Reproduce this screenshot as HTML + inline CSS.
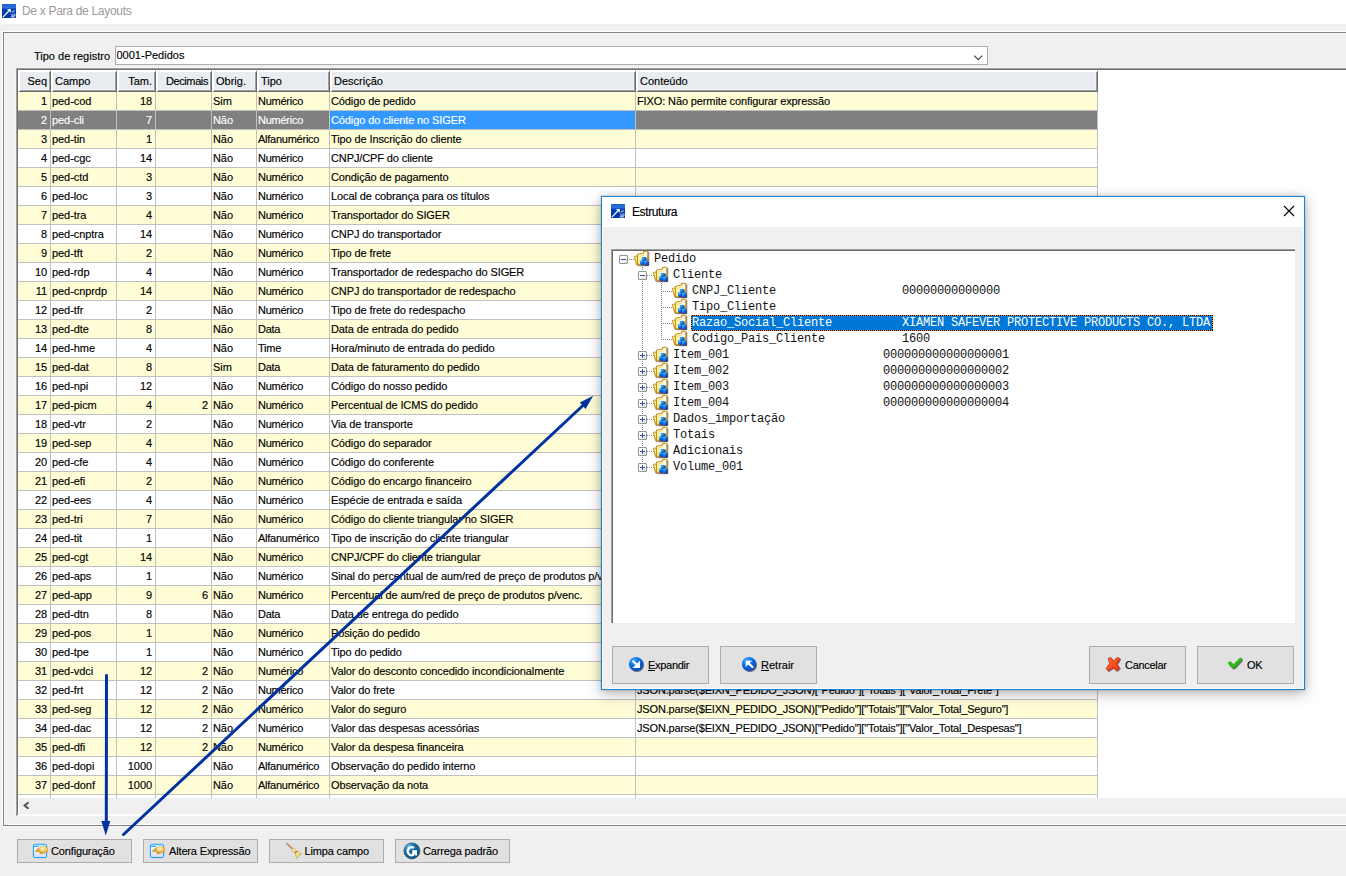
<!DOCTYPE html>
<html><head><meta charset="utf-8"><title>De x Para de Layouts</title>
<style>
*{box-sizing:border-box;margin:0;padding:0}
html,body{width:1346px;height:876px;overflow:hidden;background:#fff}
body{position:relative;font-family:"Liberation Sans",sans-serif;font-size:11px;color:#000;-webkit-text-stroke:0.15px currentColor}
div,svg,span,i{position:absolute}
#main{left:0;top:24px;width:1346px;height:852px;background:#f0f0f0}
#title{-webkit-text-stroke:0;left:22px;top:3px;font-size:12px;letter-spacing:-0.3px;color:#9a9a9a;white-space:pre;line-height:16px}
/* group box (etched) */
#gb0{left:2px;top:31px;width:1400px;height:796px;border-left:1px solid #fff;border-top:1px solid #fff;border-bottom:1px solid #f7f7f7}
#gb{left:3px;top:32px;width:1400px;height:794px;border:1px solid #828282;border-right:0}
#gb2{left:4px;top:33px;width:1400px;height:792px;border-left:1px solid #f7f7f7;border-top:1px solid #f7f7f7;border-bottom:1px solid #fff}

#lbl{left:34px;top:49px;line-height:14px;white-space:pre}
#combo{left:115px;top:46px;width:873px;height:19px;border:1px solid #acacb8;background:#fff}
#combo span{left:0.5px;top:1px;line-height:14px;white-space:pre}
/* grid */
#grid0{left:15px;top:67px;width:1340px;height:749px;border-left:1px solid #f5f5f5;border-top:1px solid #f5f5f5}
#grid{left:16px;top:68px;width:1340px;height:748px;background:#fff;border-left:1px solid #a0a0a0;border-top:1px solid #a0a0a0}
#grid2{left:17px;top:69px;width:1340px;height:746px;border-left:1px solid #707070;border-top:1px solid #707070}
#gridwhite{left:18px;top:70px;width:1328px;height:728px;background:#fff}
#hs{left:19px;top:798px;width:1328px;height:16px;background:#f0f0f0}
.hc{top:70px;height:22px;background:#e9edf1;border-top:2px solid #fff;border-left:2px solid #fff;border-right:1px solid #696969;border-bottom:1px solid #696969;box-shadow:inset -1px -1px 0 #a0a0a0,inset -2px -2px 0 #eef2f6;line-height:14px;white-space:pre}
.hc span{top:2px}
.hc.l span{left:2px}
.hc.r span{right:3px}
.row{left:18px;width:1080px;height:19px;border-bottom:1px solid #c0c0c0;background:#fff}
.row.y{background:#fffdd6}
.row.sel{background:#808080;color:#fff}
.c{top:0;height:18px;line-height:18px;white-space:pre;overflow:hidden;padding:0 1px;letter-spacing:-0.07px}
.c.js{letter-spacing:-0.17px}
.c.r{text-align:right;padding-right:3px}
.c.hl{background:#3399ff}
.vs{top:92px;width:1px;height:706px;background:#c0c0c0}
.row.sel .c{}
/* buttons */
.btn{background:#e1e1e1;border:1px solid #adadad;white-space:pre;line-height:14px}
.btn span{top:4px;letter-spacing:-0.15px}
.btn span.d{top:11px;letter-spacing:-0.3px}
.ic{width:22px;height:19px;overflow:visible}
/* dialog */
#dlg{left:601px;top:196px;width:704px;height:494px;background:#f0f0f0;border:1px solid #1883d7;box-shadow:0 0 0 1px rgba(0,0,0,0.05),0 4px 14px rgba(0,0,0,0.27),0 0 6px rgba(0,0,0,0.13)}
#dlgt{left:602px;top:197px;width:702px;height:30px;background:#fff}
#dlgin{left:602px;top:197px;width:702px;height:492px;border:1px solid #fbfbfb;border-top:0}
#dtitle{left:632px;top:204px;font-size:12px;letter-spacing:-0.4px;line-height:16px;white-space:pre}
#tree{left:611px;top:249px;width:684px;height:374px;background:#fff;border-left:1px solid #a0a0a0;border-top:1px solid #a0a0a0}
#tree2{left:612px;top:250px;width:683px;height:373px;border-left:1px solid #696969;border-top:1px solid #696969}
#tree3{left:611px;top:623px;width:684px;height:1px;background:#ececec}
.tt{-webkit-text-stroke:0;font-family:"Liberation Mono",monospace;font-size:12px;letter-spacing:-0.2px;line-height:16px;height:16px;white-space:pre;padding-left:2px;color:#111}
.tt.w{color:#fff}
.tsel{height:16px;background:
 repeating-linear-gradient(90deg,#ff8a28 0,#ff8a28 1px,#000 1px,#000 2px) left top/100% 1px no-repeat,
 repeating-linear-gradient(90deg,#ff8a28 0,#ff8a28 1px,#000 1px,#000 2px) left bottom/100% 1px no-repeat,
 repeating-linear-gradient(180deg,#ff8a28 0,#ff8a28 1px,#000 1px,#000 2px) left top/1px 100% no-repeat,
 repeating-linear-gradient(180deg,#000 0,#000 1px,#ff8a28 1px,#ff8a28 2px) right top/1px 100% no-repeat,
 #0078d7}
.bx{width:9px;height:9px;border:1px solid #919191;background:linear-gradient(135deg,#fff 0%,#fff 40%,#d8d8d8 100%);border-radius:1px}
.bx .h{left:1px;top:3px;width:5px;height:1px;background:#3c4ea0}
.bx .v{left:3px;top:1px;width:1px;height:5px;background:#3c4ea0}
.dh{height:1px;background-image:repeating-linear-gradient(90deg,#808080 0,#808080 1px,transparent 1px,transparent 2px)}
.dv{width:1px;background-image:repeating-linear-gradient(180deg,#808080 0,#808080 1px,transparent 1px,transparent 2px)}
.fi{overflow:visible}
</style></head><body>
<svg width="0" height="0" style="left:0;top:0">
<defs>
<filter id="ds" x="-30%" y="-30%" width="170%" height="170%"><feDropShadow dx="0.9" dy="0.9" stdDeviation="0.55" flood-color="#000" flood-opacity="0.6"/></filter>
<filter id="ds2" x="-30%" y="-30%" width="170%" height="170%"><feDropShadow dx="0.8" dy="0.8" stdDeviation="0.5" flood-color="#101028" flood-opacity="0.7"/></filter>
<linearGradient id="gFold" x1="1" y1="0" x2="0" y2="1"><stop offset="0" stop-color="#ffffff"/><stop offset="0.4" stop-color="#fffbe0"/><stop offset="0.7" stop-color="#fff0a0"/><stop offset="1" stop-color="#fbdc58"/></linearGradient>
<linearGradient id="gCube" x1="0" y1="0" x2="1" y2="1"><stop offset="0" stop-color="#28a8ff"/><stop offset="0.5" stop-color="#0f6fe8"/><stop offset="1" stop-color="#0638b8"/></linearGradient>
<linearGradient id="gWin" x1="0" y1="0" x2="0" y2="1"><stop offset="0" stop-color="#ffffff"/><stop offset="0.45" stop-color="#f6f6ff"/><stop offset="1" stop-color="#d8d6fb"/></linearGradient>
<radialGradient id="gHand" cx="0.45" cy="0.3" r="0.75"><stop offset="0" stop-color="#fff6d8"/><stop offset="0.45" stop-color="#f2cf7c"/><stop offset="1" stop-color="#d9961f"/></radialGradient>
<linearGradient id="gBlue" x1="0" y1="0" x2="0" y2="1"><stop offset="0" stop-color="#1f5fd2"/><stop offset="0.3" stop-color="#2f74dc"/><stop offset="0.34" stop-color="#0640b0"/><stop offset="1" stop-color="#0338a6"/></linearGradient>
<radialGradient id="gBall" cx="0.33" cy="0.25" r="0.85"><stop offset="0" stop-color="#3fa6ff"/><stop offset="0.45" stop-color="#0b70e6"/><stop offset="1" stop-color="#0540b4"/></radialGradient>
<radialGradient id="gTeal" cx="0.3" cy="0.22" r="0.9"><stop offset="0" stop-color="#6ec4ea"/><stop offset="0.35" stop-color="#1773b2"/><stop offset="1" stop-color="#04507f"/></radialGradient>
<linearGradient id="gRed" x1="0" y1="0" x2="1" y2="1"><stop offset="0" stop-color="#ff7a40"/><stop offset="0.5" stop-color="#ff5018"/><stop offset="1" stop-color="#f03c0c"/></linearGradient>
<linearGradient id="gGreen" x1="0" y1="0" x2="0" y2="1"><stop offset="0" stop-color="#4cc832"/><stop offset="1" stop-color="#1fa012"/></linearGradient>
<!-- folder icon, 22x19, origin = (icon_x-3, row_y-2) -->
<g id="fold">
 <g filter="url(#ds2)">
 <path d="M3.3 7.4 L6.4 7.0 L6.4 15.4 L5.6 15.6 Z" fill="#fff3b8" stroke="#c48c06" stroke-width="0.9" stroke-linejoin="round"/>
 <path d="M6.4 5.3 L12.7 4.1 L12.5 2.3 L16.2 2.3 Q16.8 2.3 16.8 2.9 L16.7 15.7 L7 15.7 Q6.4 15.7 6.4 15.1 Z" fill="url(#gFold)" stroke="#c48c06" stroke-width="1" stroke-linejoin="round"/>
 </g>
 <path d="M8 7.2 L13.6 6.1" stroke="#ecd26a" stroke-width="0.7" fill="none"/>
 <g filter="url(#ds2)">
 <rect x="10.9" y="8.0" width="4.2" height="3.5" rx="0.5" fill="url(#gCube)"/>
 <rect x="9.1" y="11.3" width="4" height="4.1" rx="0.5" fill="url(#gCube)"/>
 <rect x="13.0" y="11.6" width="4.1" height="4.3" rx="0.5" fill="url(#gCube)"/>
 </g>
 <ellipse cx="12.4" cy="9.3" rx="1.2" ry="0.7" fill="#38c4ff" opacity="0.85"/>
 <ellipse cx="10.7" cy="12.6" rx="1.1" ry="0.6" fill="#5cd0ff" opacity="0.85"/>
 <ellipse cx="14.6" cy="12.9" rx="1.1" ry="0.6" fill="#5cd0ff" opacity="0.85"/>
</g>
<!-- app icon 14x14 -->
<g id="appico">
 <rect x="0" y="0" width="14" height="14" rx="0.6" fill="url(#gBlue)"/>
 <path d="M0.9 13.1 L6.8 7.0" stroke="#fff" stroke-width="1.25" fill="none"/>
 <path d="M4.9 5.2 L8.9 5.0 L8.7 8.9 L7.6 7.6 L6.2 6.4 Z" fill="#fff"/>
 <path d="M10.2 8.2 L12.6 6.4" stroke="#b8c8ee" stroke-width="1.1" fill="none"/>
 <path d="M9 10.6 L10.6 10.3 M12 9.2 L12.6 12.4 M8.6 12.9 L10.4 12.3 M10.6 11 L12.2 13.6 M13 10.6 L13.8 11.4" stroke="#9db4e6" stroke-width="1.2" fill="none" opacity="0.9"/>
 <rect x="9.8" y="11.2" width="2.6" height="2.6" fill="#a9bce8" opacity="0.8"/>
</g>
<!-- hand/window icon 22x19 -->
<g id="hand">
 <rect x="3.4" y="3.3" width="13.2" height="13.3" rx="1.4" fill="url(#gWin)" stroke="#0a9bff" stroke-width="1"/>
 <path d="M4 5.4 L8.9 5.4" stroke="#0a9bff" stroke-width="1"/>
 <path d="M4 4.3 L16 4.3" stroke="#9ad4ff" stroke-width="0.8"/>
 <path d="M5.1 10.1 L8.6 7.1 L10.8 7.3 L10 10 L6.2 10.9 Z" fill="#dca43c" stroke="#c88a1e" stroke-width="0.4"/>
 <path d="M9 10.3 L13.6 11.4 L12.9 13.1 L10.3 13 L9.2 11.6 Z" fill="#d1962c"/>
 <ellipse cx="13.3" cy="8.8" rx="4.6" ry="3.3" fill="url(#gHand)" stroke="#cf9428" stroke-width="0.5"/>
</g>
<!-- broom 22x19 -->
<g id="broom">
 <path d="M3.9 2.5 L9.2 7.5" stroke="#c28a52" stroke-width="1.5" stroke-linecap="round"/>
 <path d="M3.6 3.2 L8.7 8.1" stroke="#8f7a66" stroke-width="0.6" opacity="0.6"/>
 <ellipse cx="10.7" cy="9.1" rx="2.1" ry="1.7" transform="rotate(40 10.7 9.1)" fill="#f3e094" stroke="#b9a24e" stroke-width="0.4"/>
 <path d="M9 7 L10 6.4 L10.4 7.6 Z" fill="#c8a83c"/>
 <path d="M12.0 12.1 L14.9 10.3 L18.7 12.5 L13.5 17.5 Z" fill="#efd982" stroke="#b9a24e" stroke-width="0.5" stroke-linejoin="round"/>
 <path d="M13.6 17.2 L18.4 12.7" stroke="#a8903c" stroke-width="0.7" opacity="0.7"/>
 <circle cx="12.4" cy="11.4" r="0.75" fill="#d2501e"/>
 <circle cx="13.5" cy="10.5" r="0.75" fill="#d2501e"/>
</g>
<!-- G icon 22x19 -->
<g id="gico">
 <circle cx="10.9" cy="9.9" r="8" fill="url(#gTeal)" stroke="#15405e" stroke-width="0.6"/>
 <path d="M13.0 6.9 A4.0 4.0 0 1 0 12.8 13.6" fill="none" stroke="#fff" stroke-width="2.2"/>
 <path d="M10.8 9.2 L16 9.2 L16 14.6 L14.2 14.6 L13.8 13.6 L11 13.8 Z" fill="#fff"/>
 <path d="M8.6 10.4 L11.2 8.6 L11.2 12.4 Z" fill="#0a5a96"/>
</g>
<!-- Expandir 22x19 -->
<g id="expico">
 <circle cx="10" cy="10" r="7.1" fill="url(#gBall)" filter="url(#ds)"/>
 <path d="M7.3 7.5 L11 11" stroke="#fff" stroke-width="2.3" stroke-linecap="round"/>
 <path d="M13.9 6.4 L13.9 13.9 L6.4 13.9 L10.4 10.4 Z" fill="#fff"/>
</g>
<g id="retico">
 <circle cx="10.95" cy="10" r="7.05" fill="url(#gBall)" filter="url(#ds)"/>
 <path d="M14.4 13 L10 8.7" stroke="#fff" stroke-width="2.3" stroke-linecap="round"/>
 <path d="M7.7 6.8 L14.4 6.8 L10.6 9.6 L7.7 13.2 Z" fill="#fff"/>
</g>
<g id="xico">
 <path d="M5.2 4.6 L7.6 3.4 L10.4 7.4 L14 3.4 L16.8 4.6 L13.5 10 L16.5 14 L13.5 16.6 L9.8 13.3 L5 16.8 L3.2 14.3 L6.8 9.6 Z" fill="url(#gRed)" stroke="#c8201a" stroke-width="0.8" stroke-linejoin="round" filter="url(#ds)"/>
</g>
<g id="okico">
 <path d="M5.9 9.2 L9.3 12.9 L16.4 5.5" fill="none" stroke="url(#gGreen)" stroke-width="3.2" stroke-linecap="round" stroke-linejoin="round" filter="url(#ds)"/>
 <path d="M5.9 9.2 L9.3 12.9 L16.4 5.5" fill="none" stroke="#2cb01a" stroke-width="3.2" stroke-linecap="round" stroke-linejoin="round"/>
 <path d="M6 8.6 L9.3 12 L16 4.9" fill="none" stroke="#58d03c" stroke-width="0.9" stroke-linecap="round" opacity="0.8"/>
</g>
</defs></svg>

<!-- title bar -->
<svg style="left:2px;top:4px" width="14" height="14" viewBox="0 0 14 14"><use href="#appico"/></svg>
<div id="title">De x Para de Layouts</div>

<div id="main"></div>
<div id="gb0"></div><div id="gb"></div><div id="gb2"></div>
<div id="lbl">Tipo de registro</div>
<div id="combo"><span>0001-Pedidos</span>
 <svg style="left:857px;top:8px" width="11" height="7" viewBox="0 0 11 7"><path d="M1.2 0.7 L5.2 4.7 L9.2 0.7" fill="none" stroke="#404040" stroke-width="1.2"/></svg>
</div>

<div id="grid0"></div><div id="grid"></div><div id="grid2"></div><div id="gridwhite"></div>
<div class="hc r" style="left:18px;width:33px"><span>Seq</span></div>
<div class="hc l" style="left:51px;width:66px"><span>Campo</span></div>
<div class="hc r" style="left:117px;width:39px"><span>Tam.</span></div>
<div class="hc r" style="left:156px;width:56px"><span style="letter-spacing:-0.4px">Decimais</span></div>
<div class="hc l" style="left:212px;width:45px"><span>Obrig.</span></div>
<div class="hc l" style="left:257px;width:73px"><span>Tipo</span></div>
<div class="hc l" style="left:330px;width:306px"><span>Descrição</span></div>
<div class="hc l" style="left:636px;width:462px"><span>Conteúdo</span></div>
<div class="row y" style="top:92px">
<div class="c r" style="left:0px;width:32px">1</div>
<div class="c l" style="left:33px;width:65px">ped-cod</div>
<div class="c r" style="left:99px;width:38px">18</div>
<div class="c r" style="left:138px;width:55px"></div>
<div class="c l" style="left:194px;width:44px">Sim</div>
<div class="c l" style="left:239px;width:72px;letter-spacing:-0.25px">Numérico</div>
<div class="c l" style="left:312px;width:305px;letter-spacing:-0.11px">Código de pedido</div>
<div class="c l" style="left:618px;width:461px;letter-spacing:-0.12px">FIXO: Não permite configurar expressão</div>
</div>
<div class="row sel" style="top:111px">
<div class="c r" style="left:0px;width:32px">2</div>
<div class="c l" style="left:33px;width:65px">ped-cli</div>
<div class="c r" style="left:99px;width:38px">7</div>
<div class="c r" style="left:138px;width:55px"></div>
<div class="c l" style="left:194px;width:44px">Não</div>
<div class="c l" style="left:239px;width:72px;letter-spacing:-0.25px">Numérico</div>
<div class="c l hl" style="left:312px;width:305px;letter-spacing:-0.11px">Código do cliente no SIGER</div>
<div class="c l" style="left:618px;width:461px;letter-spacing:-0.12px"></div>
</div>
<div class="row y" style="top:130px">
<div class="c r" style="left:0px;width:32px">3</div>
<div class="c l" style="left:33px;width:65px">ped-tin</div>
<div class="c r" style="left:99px;width:38px">1</div>
<div class="c r" style="left:138px;width:55px"></div>
<div class="c l" style="left:194px;width:44px">Não</div>
<div class="c l" style="left:239px;width:72px;letter-spacing:-0.25px">Alfanumérico</div>
<div class="c l" style="left:312px;width:305px;letter-spacing:-0.11px">Tipo de Inscrição do cliente</div>
<div class="c l" style="left:618px;width:461px;letter-spacing:-0.12px"></div>
</div>
<div class="row" style="top:149px">
<div class="c r" style="left:0px;width:32px">4</div>
<div class="c l" style="left:33px;width:65px">ped-cgc</div>
<div class="c r" style="left:99px;width:38px">14</div>
<div class="c r" style="left:138px;width:55px"></div>
<div class="c l" style="left:194px;width:44px">Não</div>
<div class="c l" style="left:239px;width:72px;letter-spacing:-0.25px">Numérico</div>
<div class="c l" style="left:312px;width:305px;letter-spacing:-0.11px">CNPJ/CPF do cliente</div>
<div class="c l" style="left:618px;width:461px;letter-spacing:-0.12px"></div>
</div>
<div class="row y" style="top:168px">
<div class="c r" style="left:0px;width:32px">5</div>
<div class="c l" style="left:33px;width:65px">ped-ctd</div>
<div class="c r" style="left:99px;width:38px">3</div>
<div class="c r" style="left:138px;width:55px"></div>
<div class="c l" style="left:194px;width:44px">Não</div>
<div class="c l" style="left:239px;width:72px;letter-spacing:-0.25px">Numérico</div>
<div class="c l" style="left:312px;width:305px;letter-spacing:-0.11px">Condição de pagamento</div>
<div class="c l" style="left:618px;width:461px;letter-spacing:-0.12px"></div>
</div>
<div class="row" style="top:187px">
<div class="c r" style="left:0px;width:32px">6</div>
<div class="c l" style="left:33px;width:65px">ped-loc</div>
<div class="c r" style="left:99px;width:38px">3</div>
<div class="c r" style="left:138px;width:55px"></div>
<div class="c l" style="left:194px;width:44px">Não</div>
<div class="c l" style="left:239px;width:72px;letter-spacing:-0.25px">Numérico</div>
<div class="c l" style="left:312px;width:305px;letter-spacing:-0.11px">Local de cobrança para os títulos</div>
<div class="c l" style="left:618px;width:461px;letter-spacing:-0.12px"></div>
</div>
<div class="row y" style="top:206px">
<div class="c r" style="left:0px;width:32px">7</div>
<div class="c l" style="left:33px;width:65px">ped-tra</div>
<div class="c r" style="left:99px;width:38px">4</div>
<div class="c r" style="left:138px;width:55px"></div>
<div class="c l" style="left:194px;width:44px">Não</div>
<div class="c l" style="left:239px;width:72px;letter-spacing:-0.25px">Numérico</div>
<div class="c l" style="left:312px;width:305px;letter-spacing:-0.11px">Transportador do SIGER</div>
<div class="c l" style="left:618px;width:461px;letter-spacing:-0.12px"></div>
</div>
<div class="row" style="top:225px">
<div class="c r" style="left:0px;width:32px">8</div>
<div class="c l" style="left:33px;width:65px">ped-cnptra</div>
<div class="c r" style="left:99px;width:38px">14</div>
<div class="c r" style="left:138px;width:55px"></div>
<div class="c l" style="left:194px;width:44px">Não</div>
<div class="c l" style="left:239px;width:72px;letter-spacing:-0.25px">Numérico</div>
<div class="c l" style="left:312px;width:305px;letter-spacing:-0.11px">CNPJ do transportador</div>
<div class="c l" style="left:618px;width:461px;letter-spacing:-0.12px"></div>
</div>
<div class="row y" style="top:244px">
<div class="c r" style="left:0px;width:32px">9</div>
<div class="c l" style="left:33px;width:65px">ped-tft</div>
<div class="c r" style="left:99px;width:38px">2</div>
<div class="c r" style="left:138px;width:55px"></div>
<div class="c l" style="left:194px;width:44px">Não</div>
<div class="c l" style="left:239px;width:72px;letter-spacing:-0.25px">Numérico</div>
<div class="c l" style="left:312px;width:305px;letter-spacing:-0.11px">Tipo de frete</div>
<div class="c l" style="left:618px;width:461px;letter-spacing:-0.12px"></div>
</div>
<div class="row" style="top:263px">
<div class="c r" style="left:0px;width:32px">10</div>
<div class="c l" style="left:33px;width:65px">ped-rdp</div>
<div class="c r" style="left:99px;width:38px">4</div>
<div class="c r" style="left:138px;width:55px"></div>
<div class="c l" style="left:194px;width:44px">Não</div>
<div class="c l" style="left:239px;width:72px;letter-spacing:-0.25px">Numérico</div>
<div class="c l" style="left:312px;width:305px;letter-spacing:-0.11px">Transportador de redespacho do SIGER</div>
<div class="c l" style="left:618px;width:461px;letter-spacing:-0.12px"></div>
</div>
<div class="row y" style="top:282px">
<div class="c r" style="left:0px;width:32px">11</div>
<div class="c l" style="left:33px;width:65px">ped-cnprdp</div>
<div class="c r" style="left:99px;width:38px">14</div>
<div class="c r" style="left:138px;width:55px"></div>
<div class="c l" style="left:194px;width:44px">Não</div>
<div class="c l" style="left:239px;width:72px;letter-spacing:-0.25px">Numérico</div>
<div class="c l" style="left:312px;width:305px;letter-spacing:-0.11px">CNPJ do transportador de redespacho</div>
<div class="c l" style="left:618px;width:461px;letter-spacing:-0.12px"></div>
</div>
<div class="row" style="top:301px">
<div class="c r" style="left:0px;width:32px">12</div>
<div class="c l" style="left:33px;width:65px">ped-tfr</div>
<div class="c r" style="left:99px;width:38px">2</div>
<div class="c r" style="left:138px;width:55px"></div>
<div class="c l" style="left:194px;width:44px">Não</div>
<div class="c l" style="left:239px;width:72px;letter-spacing:-0.25px">Numérico</div>
<div class="c l" style="left:312px;width:305px;letter-spacing:-0.11px">Tipo de frete do redespacho</div>
<div class="c l" style="left:618px;width:461px;letter-spacing:-0.12px"></div>
</div>
<div class="row y" style="top:320px">
<div class="c r" style="left:0px;width:32px">13</div>
<div class="c l" style="left:33px;width:65px">ped-dte</div>
<div class="c r" style="left:99px;width:38px">8</div>
<div class="c r" style="left:138px;width:55px"></div>
<div class="c l" style="left:194px;width:44px">Não</div>
<div class="c l" style="left:239px;width:72px;letter-spacing:-0.25px">Data</div>
<div class="c l" style="left:312px;width:305px;letter-spacing:-0.11px">Data de entrada do pedido</div>
<div class="c l" style="left:618px;width:461px;letter-spacing:-0.12px"></div>
</div>
<div class="row" style="top:339px">
<div class="c r" style="left:0px;width:32px">14</div>
<div class="c l" style="left:33px;width:65px">ped-hme</div>
<div class="c r" style="left:99px;width:38px">4</div>
<div class="c r" style="left:138px;width:55px"></div>
<div class="c l" style="left:194px;width:44px">Não</div>
<div class="c l" style="left:239px;width:72px;letter-spacing:-0.25px">Time</div>
<div class="c l" style="left:312px;width:305px;letter-spacing:-0.11px">Hora/minuto de entrada do pedido</div>
<div class="c l" style="left:618px;width:461px;letter-spacing:-0.12px"></div>
</div>
<div class="row y" style="top:358px">
<div class="c r" style="left:0px;width:32px">15</div>
<div class="c l" style="left:33px;width:65px">ped-dat</div>
<div class="c r" style="left:99px;width:38px">8</div>
<div class="c r" style="left:138px;width:55px"></div>
<div class="c l" style="left:194px;width:44px">Sim</div>
<div class="c l" style="left:239px;width:72px;letter-spacing:-0.25px">Data</div>
<div class="c l" style="left:312px;width:305px;letter-spacing:-0.11px">Data de faturamento do pedido</div>
<div class="c l" style="left:618px;width:461px;letter-spacing:-0.12px"></div>
</div>
<div class="row" style="top:377px">
<div class="c r" style="left:0px;width:32px">16</div>
<div class="c l" style="left:33px;width:65px">ped-npi</div>
<div class="c r" style="left:99px;width:38px">12</div>
<div class="c r" style="left:138px;width:55px"></div>
<div class="c l" style="left:194px;width:44px">Não</div>
<div class="c l" style="left:239px;width:72px;letter-spacing:-0.25px">Numérico</div>
<div class="c l" style="left:312px;width:305px;letter-spacing:-0.11px">Código do nosso pedido</div>
<div class="c l" style="left:618px;width:461px;letter-spacing:-0.12px"></div>
</div>
<div class="row y" style="top:396px">
<div class="c r" style="left:0px;width:32px">17</div>
<div class="c l" style="left:33px;width:65px">ped-picm</div>
<div class="c r" style="left:99px;width:38px">4</div>
<div class="c r" style="left:138px;width:55px">2</div>
<div class="c l" style="left:194px;width:44px">Não</div>
<div class="c l" style="left:239px;width:72px;letter-spacing:-0.25px">Numérico</div>
<div class="c l" style="left:312px;width:305px;letter-spacing:-0.11px">Percentual de ICMS do pedido</div>
<div class="c l" style="left:618px;width:461px;letter-spacing:-0.12px"></div>
</div>
<div class="row" style="top:415px">
<div class="c r" style="left:0px;width:32px">18</div>
<div class="c l" style="left:33px;width:65px">ped-vtr</div>
<div class="c r" style="left:99px;width:38px">2</div>
<div class="c r" style="left:138px;width:55px"></div>
<div class="c l" style="left:194px;width:44px">Não</div>
<div class="c l" style="left:239px;width:72px;letter-spacing:-0.25px">Numérico</div>
<div class="c l" style="left:312px;width:305px;letter-spacing:-0.11px">Via de transporte</div>
<div class="c l" style="left:618px;width:461px;letter-spacing:-0.12px"></div>
</div>
<div class="row y" style="top:434px">
<div class="c r" style="left:0px;width:32px">19</div>
<div class="c l" style="left:33px;width:65px">ped-sep</div>
<div class="c r" style="left:99px;width:38px">4</div>
<div class="c r" style="left:138px;width:55px"></div>
<div class="c l" style="left:194px;width:44px">Não</div>
<div class="c l" style="left:239px;width:72px;letter-spacing:-0.25px">Numérico</div>
<div class="c l" style="left:312px;width:305px;letter-spacing:-0.11px">Código do separador</div>
<div class="c l" style="left:618px;width:461px;letter-spacing:-0.12px"></div>
</div>
<div class="row" style="top:453px">
<div class="c r" style="left:0px;width:32px">20</div>
<div class="c l" style="left:33px;width:65px">ped-cfe</div>
<div class="c r" style="left:99px;width:38px">4</div>
<div class="c r" style="left:138px;width:55px"></div>
<div class="c l" style="left:194px;width:44px">Não</div>
<div class="c l" style="left:239px;width:72px;letter-spacing:-0.25px">Numérico</div>
<div class="c l" style="left:312px;width:305px;letter-spacing:-0.11px">Código do conferente</div>
<div class="c l" style="left:618px;width:461px;letter-spacing:-0.12px"></div>
</div>
<div class="row y" style="top:472px">
<div class="c r" style="left:0px;width:32px">21</div>
<div class="c l" style="left:33px;width:65px">ped-efi</div>
<div class="c r" style="left:99px;width:38px">2</div>
<div class="c r" style="left:138px;width:55px"></div>
<div class="c l" style="left:194px;width:44px">Não</div>
<div class="c l" style="left:239px;width:72px;letter-spacing:-0.25px">Numérico</div>
<div class="c l" style="left:312px;width:305px;letter-spacing:-0.11px">Código do encargo financeiro</div>
<div class="c l" style="left:618px;width:461px;letter-spacing:-0.12px"></div>
</div>
<div class="row" style="top:491px">
<div class="c r" style="left:0px;width:32px">22</div>
<div class="c l" style="left:33px;width:65px">ped-ees</div>
<div class="c r" style="left:99px;width:38px">4</div>
<div class="c r" style="left:138px;width:55px"></div>
<div class="c l" style="left:194px;width:44px">Não</div>
<div class="c l" style="left:239px;width:72px;letter-spacing:-0.25px">Numérico</div>
<div class="c l" style="left:312px;width:305px;letter-spacing:-0.11px">Espécie de entrada e saída</div>
<div class="c l" style="left:618px;width:461px;letter-spacing:-0.12px"></div>
</div>
<div class="row y" style="top:510px">
<div class="c r" style="left:0px;width:32px">23</div>
<div class="c l" style="left:33px;width:65px">ped-tri</div>
<div class="c r" style="left:99px;width:38px">7</div>
<div class="c r" style="left:138px;width:55px"></div>
<div class="c l" style="left:194px;width:44px">Não</div>
<div class="c l" style="left:239px;width:72px;letter-spacing:-0.25px">Numérico</div>
<div class="c l" style="left:312px;width:305px;letter-spacing:-0.11px">Código do cliente triangular no SIGER</div>
<div class="c l" style="left:618px;width:461px;letter-spacing:-0.12px"></div>
</div>
<div class="row" style="top:529px">
<div class="c r" style="left:0px;width:32px">24</div>
<div class="c l" style="left:33px;width:65px">ped-tit</div>
<div class="c r" style="left:99px;width:38px">1</div>
<div class="c r" style="left:138px;width:55px"></div>
<div class="c l" style="left:194px;width:44px">Não</div>
<div class="c l" style="left:239px;width:72px;letter-spacing:-0.25px">Alfanumérico</div>
<div class="c l" style="left:312px;width:305px;letter-spacing:-0.11px">Tipo de inscrição do cliente triangular</div>
<div class="c l" style="left:618px;width:461px;letter-spacing:-0.12px"></div>
</div>
<div class="row y" style="top:548px">
<div class="c r" style="left:0px;width:32px">25</div>
<div class="c l" style="left:33px;width:65px">ped-cgt</div>
<div class="c r" style="left:99px;width:38px">14</div>
<div class="c r" style="left:138px;width:55px"></div>
<div class="c l" style="left:194px;width:44px">Não</div>
<div class="c l" style="left:239px;width:72px;letter-spacing:-0.25px">Numérico</div>
<div class="c l" style="left:312px;width:305px;letter-spacing:-0.11px">CNPJ/CPF do cliente triangular</div>
<div class="c l" style="left:618px;width:461px;letter-spacing:-0.12px"></div>
</div>
<div class="row" style="top:567px">
<div class="c r" style="left:0px;width:32px">26</div>
<div class="c l" style="left:33px;width:65px">ped-aps</div>
<div class="c r" style="left:99px;width:38px">1</div>
<div class="c r" style="left:138px;width:55px"></div>
<div class="c l" style="left:194px;width:44px">Não</div>
<div class="c l" style="left:239px;width:72px;letter-spacing:-0.25px">Numérico</div>
<div class="c l" style="left:312px;width:305px;letter-spacing:-0.11px">Sinal do percentual de aum/red de preço de produtos p/venc.</div>
<div class="c l" style="left:618px;width:461px;letter-spacing:-0.12px"></div>
</div>
<div class="row y" style="top:586px">
<div class="c r" style="left:0px;width:32px">27</div>
<div class="c l" style="left:33px;width:65px">ped-app</div>
<div class="c r" style="left:99px;width:38px">9</div>
<div class="c r" style="left:138px;width:55px">6</div>
<div class="c l" style="left:194px;width:44px">Não</div>
<div class="c l" style="left:239px;width:72px;letter-spacing:-0.25px">Numérico</div>
<div class="c l" style="left:312px;width:305px;letter-spacing:-0.11px">Percentual de aum/red de preço de produtos p/venc.</div>
<div class="c l" style="left:618px;width:461px;letter-spacing:-0.12px"></div>
</div>
<div class="row" style="top:605px">
<div class="c r" style="left:0px;width:32px">28</div>
<div class="c l" style="left:33px;width:65px">ped-dtn</div>
<div class="c r" style="left:99px;width:38px">8</div>
<div class="c r" style="left:138px;width:55px"></div>
<div class="c l" style="left:194px;width:44px">Não</div>
<div class="c l" style="left:239px;width:72px;letter-spacing:-0.25px">Data</div>
<div class="c l" style="left:312px;width:305px;letter-spacing:-0.11px">Data de entrega do pedido</div>
<div class="c l" style="left:618px;width:461px;letter-spacing:-0.12px"></div>
</div>
<div class="row y" style="top:624px">
<div class="c r" style="left:0px;width:32px">29</div>
<div class="c l" style="left:33px;width:65px">ped-pos</div>
<div class="c r" style="left:99px;width:38px">1</div>
<div class="c r" style="left:138px;width:55px"></div>
<div class="c l" style="left:194px;width:44px">Não</div>
<div class="c l" style="left:239px;width:72px;letter-spacing:-0.25px">Numérico</div>
<div class="c l" style="left:312px;width:305px;letter-spacing:-0.11px">Posição do pedido</div>
<div class="c l" style="left:618px;width:461px;letter-spacing:-0.12px"></div>
</div>
<div class="row" style="top:643px">
<div class="c r" style="left:0px;width:32px">30</div>
<div class="c l" style="left:33px;width:65px">ped-tpe</div>
<div class="c r" style="left:99px;width:38px">1</div>
<div class="c r" style="left:138px;width:55px"></div>
<div class="c l" style="left:194px;width:44px">Não</div>
<div class="c l" style="left:239px;width:72px;letter-spacing:-0.25px">Numérico</div>
<div class="c l" style="left:312px;width:305px;letter-spacing:-0.11px">Tipo do pedido</div>
<div class="c l" style="left:618px;width:461px;letter-spacing:-0.12px"></div>
</div>
<div class="row y" style="top:662px">
<div class="c r" style="left:0px;width:32px">31</div>
<div class="c l" style="left:33px;width:65px">ped-vdci</div>
<div class="c r" style="left:99px;width:38px">12</div>
<div class="c r" style="left:138px;width:55px">2</div>
<div class="c l" style="left:194px;width:44px">Não</div>
<div class="c l" style="left:239px;width:72px;letter-spacing:-0.25px">Numérico</div>
<div class="c l" style="left:312px;width:305px;letter-spacing:-0.11px">Valor do desconto concedido incondicionalmente</div>
<div class="c l" style="left:618px;width:461px;letter-spacing:-0.12px"></div>
</div>
<div class="row" style="top:681px">
<div class="c r" style="left:0px;width:32px">32</div>
<div class="c l" style="left:33px;width:65px">ped-frt</div>
<div class="c r" style="left:99px;width:38px">12</div>
<div class="c r" style="left:138px;width:55px">2</div>
<div class="c l" style="left:194px;width:44px">Não</div>
<div class="c l" style="left:239px;width:72px;letter-spacing:-0.25px">Numérico</div>
<div class="c l" style="left:312px;width:305px;letter-spacing:-0.11px">Valor do frete</div>
<div class="c l js" style="left:618px;width:461px">JSON.parse($EIXN_PEDIDO_JSON)[&quot;Pedido&quot;][&quot;Totais&quot;][&quot;Valor_Total_Frete&quot;]</div>
</div>
<div class="row y" style="top:700px">
<div class="c r" style="left:0px;width:32px">33</div>
<div class="c l" style="left:33px;width:65px">ped-seg</div>
<div class="c r" style="left:99px;width:38px">12</div>
<div class="c r" style="left:138px;width:55px">2</div>
<div class="c l" style="left:194px;width:44px">Não</div>
<div class="c l" style="left:239px;width:72px;letter-spacing:-0.25px">Numérico</div>
<div class="c l" style="left:312px;width:305px;letter-spacing:-0.11px">Valor do seguro</div>
<div class="c l js" style="left:618px;width:461px">JSON.parse($EIXN_PEDIDO_JSON)[&quot;Pedido&quot;][&quot;Totais&quot;][&quot;Valor_Total_Seguro&quot;]</div>
</div>
<div class="row" style="top:719px">
<div class="c r" style="left:0px;width:32px">34</div>
<div class="c l" style="left:33px;width:65px">ped-dac</div>
<div class="c r" style="left:99px;width:38px">12</div>
<div class="c r" style="left:138px;width:55px">2</div>
<div class="c l" style="left:194px;width:44px">Não</div>
<div class="c l" style="left:239px;width:72px;letter-spacing:-0.25px">Numérico</div>
<div class="c l" style="left:312px;width:305px;letter-spacing:-0.11px">Valor das despesas acessórias</div>
<div class="c l js" style="left:618px;width:461px">JSON.parse($EIXN_PEDIDO_JSON)[&quot;Pedido&quot;][&quot;Totais&quot;][&quot;Valor_Total_Despesas&quot;]</div>
</div>
<div class="row y" style="top:738px">
<div class="c r" style="left:0px;width:32px">35</div>
<div class="c l" style="left:33px;width:65px">ped-dfi</div>
<div class="c r" style="left:99px;width:38px">12</div>
<div class="c r" style="left:138px;width:55px">2</div>
<div class="c l" style="left:194px;width:44px">Não</div>
<div class="c l" style="left:239px;width:72px;letter-spacing:-0.25px">Numérico</div>
<div class="c l" style="left:312px;width:305px;letter-spacing:-0.11px">Valor da despesa financeira</div>
<div class="c l" style="left:618px;width:461px;letter-spacing:-0.12px"></div>
</div>
<div class="row" style="top:757px">
<div class="c r" style="left:0px;width:32px">36</div>
<div class="c l" style="left:33px;width:65px">ped-dopi</div>
<div class="c r" style="left:99px;width:38px">1000</div>
<div class="c r" style="left:138px;width:55px"></div>
<div class="c l" style="left:194px;width:44px">Não</div>
<div class="c l" style="left:239px;width:72px;letter-spacing:-0.25px">Alfanumérico</div>
<div class="c l" style="left:312px;width:305px;letter-spacing:-0.11px">Observação do pedido interno</div>
<div class="c l" style="left:618px;width:461px;letter-spacing:-0.12px"></div>
</div>
<div class="row y" style="top:776px">
<div class="c r" style="left:0px;width:32px">37</div>
<div class="c l" style="left:33px;width:65px">ped-donf</div>
<div class="c r" style="left:99px;width:38px">1000</div>
<div class="c r" style="left:138px;width:55px"></div>
<div class="c l" style="left:194px;width:44px">Não</div>
<div class="c l" style="left:239px;width:72px;letter-spacing:-0.25px">Alfanumérico</div>
<div class="c l" style="left:312px;width:305px;letter-spacing:-0.11px">Observação da nota</div>
<div class="c l" style="left:618px;width:461px;letter-spacing:-0.12px"></div>
</div>
<div class="vs" style="left:50px"></div>
<div class="vs" style="left:116px"></div>
<div class="vs" style="left:155px"></div>
<div class="vs" style="left:211px"></div>
<div class="vs" style="left:256px"></div>
<div class="vs" style="left:329px"></div>
<div class="vs" style="left:635px"></div>
<div class="vs" style="left:1097px"></div>
<div id="hs"><svg style="left:4px;top:4px" width="7" height="7" viewBox="0 0 7 7"><path d="M5.6 0.3 L1.6 3.5 L5.6 6.7" fill="none" stroke="#505050" stroke-width="2"/></svg></div>

<!-- bottom buttons -->
<div class="btn" style="left:17px;top:839px;width:115px;height:24px"><svg class="ic" style="left:12px;top:1px"><use href="#hand"/></svg><span style="left:33px">Configuração</span></div>
<div class="btn" style="left:143px;top:839px;width:115px;height:24px"><svg class="ic" style="left:3px;top:1px"><use href="#hand"/></svg><span style="left:25px">Altera Expressão</span></div>
<div class="btn" style="left:269px;top:839px;width:115px;height:24px"><svg class="ic" style="left:13px;top:1px"><use href="#broom"/></svg><span style="left:34.5px">Limpa campo</span></div>
<div class="btn" style="left:395px;top:839px;width:115px;height:24px"><svg class="ic" style="left:5px;top:1px"><use href="#gico"/></svg><span style="left:27px">Carrega padrão</span></div>

<!-- dialog -->
<div id="dlg"></div><div id="dlgin"></div><div id="dlgt"></div>
<svg style="left:611px;top:204px" width="14" height="14" viewBox="0 0 14 14"><use href="#appico"/></svg>
<div id="dtitle">Estrutura</div>
<svg style="left:1283px;top:205px" width="12" height="12" viewBox="0 0 12 12"><path d="M1 1 L11 11 M11 1 L1 11" stroke="#000" stroke-width="1.1" fill="none"/></svg>
<div id="tree"></div><div id="tree2"></div><div id="tree3"></div>
<div class="dv" style="left:642px;top:267px;height:201px"></div>
<div class="dv" style="left:661px;top:283px;height:57px"></div>
<div class="bx" style="left:619px;top:255px"><i class="h"></i></div>
<div class="dh" style="left:629px;top:259px;width:5px"></div>
<svg class="ic" style="left:631px;top:249px"><use href="#fold"/></svg>
<div class="tt" style="left:652px;top:251px">Pedido</div>
<div class="bx" style="left:638px;top:271px"><i class="h"></i></div>
<div class="dh" style="left:647px;top:275px;width:6px"></div>
<svg class="ic" style="left:650px;top:265px"><use href="#fold"/></svg>
<div class="tt" style="left:671px;top:267px">Cliente</div>
<div class="dh" style="left:663px;top:291px;width:9px"></div>
<svg class="ic" style="left:669px;top:281px"><use href="#fold"/></svg>
<div class="tt" style="left:690px;top:283px">CNPJ_Cliente                  00000000000000</div>
<div class="dh" style="left:663px;top:307px;width:9px"></div>
<svg class="ic" style="left:669px;top:297px"><use href="#fold"/></svg>
<div class="tt" style="left:690px;top:299px">Tipo_Cliente</div>
<div class="dh" style="left:663px;top:323px;width:9px"></div>
<svg class="ic" style="left:669px;top:313px"><use href="#fold"/></svg>
<div class="tsel" style="left:691px;top:315px;width:522px"></div>
<div class="tt w" style="left:690px;top:315px">Razao_Social_Cliente          XIAMEN SAFEVER PROTECTIVE PRODUCTS CO., LTDA</div>
<div class="dh" style="left:663px;top:339px;width:9px"></div>
<svg class="ic" style="left:669px;top:329px"><use href="#fold"/></svg>
<div class="tt" style="left:690px;top:331px">Codigo_Pais_Cliente           1600</div>
<div class="bx" style="left:638px;top:351px"><i class="h"></i><i class="v"></i></div>
<div class="dh" style="left:647px;top:355px;width:6px"></div>
<svg class="ic" style="left:650px;top:345px"><use href="#fold"/></svg>
<div class="tt" style="left:671px;top:347px">Item_001                      000000000000000001</div>
<div class="bx" style="left:638px;top:367px"><i class="h"></i><i class="v"></i></div>
<div class="dh" style="left:647px;top:371px;width:6px"></div>
<svg class="ic" style="left:650px;top:361px"><use href="#fold"/></svg>
<div class="tt" style="left:671px;top:363px">Item_002                      000000000000000002</div>
<div class="bx" style="left:638px;top:383px"><i class="h"></i><i class="v"></i></div>
<div class="dh" style="left:647px;top:387px;width:6px"></div>
<svg class="ic" style="left:650px;top:377px"><use href="#fold"/></svg>
<div class="tt" style="left:671px;top:379px">Item_003                      000000000000000003</div>
<div class="bx" style="left:638px;top:399px"><i class="h"></i><i class="v"></i></div>
<div class="dh" style="left:647px;top:403px;width:6px"></div>
<svg class="ic" style="left:650px;top:393px"><use href="#fold"/></svg>
<div class="tt" style="left:671px;top:395px">Item_004                      000000000000000004</div>
<div class="bx" style="left:638px;top:415px"><i class="h"></i><i class="v"></i></div>
<div class="dh" style="left:647px;top:419px;width:6px"></div>
<svg class="ic" style="left:650px;top:409px"><use href="#fold"/></svg>
<div class="tt" style="left:671px;top:411px">Dados_importação</div>
<div class="bx" style="left:638px;top:431px"><i class="h"></i><i class="v"></i></div>
<div class="dh" style="left:647px;top:435px;width:6px"></div>
<svg class="ic" style="left:650px;top:425px"><use href="#fold"/></svg>
<div class="tt" style="left:671px;top:427px">Totais</div>
<div class="bx" style="left:638px;top:447px"><i class="h"></i><i class="v"></i></div>
<div class="dh" style="left:647px;top:451px;width:6px"></div>
<svg class="ic" style="left:650px;top:441px"><use href="#fold"/></svg>
<div class="tt" style="left:671px;top:443px">Adicionais</div>
<div class="bx" style="left:638px;top:463px"><i class="h"></i><i class="v"></i></div>
<div class="dh" style="left:647px;top:467px;width:6px"></div>
<svg class="ic" style="left:650px;top:457px"><use href="#fold"/></svg>
<div class="tt" style="left:671px;top:459px">Volume_001</div>
<div class="btn" style="left:612px;top:646px;width:97px;height:38px"><svg class="ic" style="left:13px;top:7px"><use href="#expico"/></svg><span class="d" style="left:35px"><u>E</u>xpandir</span></div>
<div class="btn" style="left:720px;top:646px;width:97px;height:38px"><svg class="ic" style="left:17px;top:7px"><use href="#retico"/></svg><span class="d" style="left:40px;letter-spacing:0"><u>R</u>etrair</span></div>
<div class="btn" style="left:1089px;top:646px;width:97px;height:38px"><svg class="ic" style="left:13px;top:7px"><use href="#xico"/></svg><span class="d" style="left:35px">Cancelar</span></div>
<div class="btn" style="left:1197px;top:646px;width:97px;height:38px"><svg class="ic" style="left:26px;top:7px"><use href="#okico"/></svg><span class="d" style="left:49px">OK</span></div>

<!-- annotation arrows -->
<svg style="left:0;top:0" width="1346" height="876" viewBox="0 0 1346 876">
 <path d="M106.5 675.5 L106.3 823" stroke="#0033a0" stroke-width="3" stroke-linecap="round" fill="none"/>
 <path d="M101.3 821 L110.3 821 L105.8 835.5 Z" fill="#0033a0"/>
 <path d="M123.5 834.5 L584 404.5" stroke="#0033a0" stroke-width="3" stroke-linecap="round" fill="none"/>
 <path d="M593.2 395.8 L579.8 402.4 L585.6 408.9 Z" fill="#0033a0"/>
</svg>
</body></html>
